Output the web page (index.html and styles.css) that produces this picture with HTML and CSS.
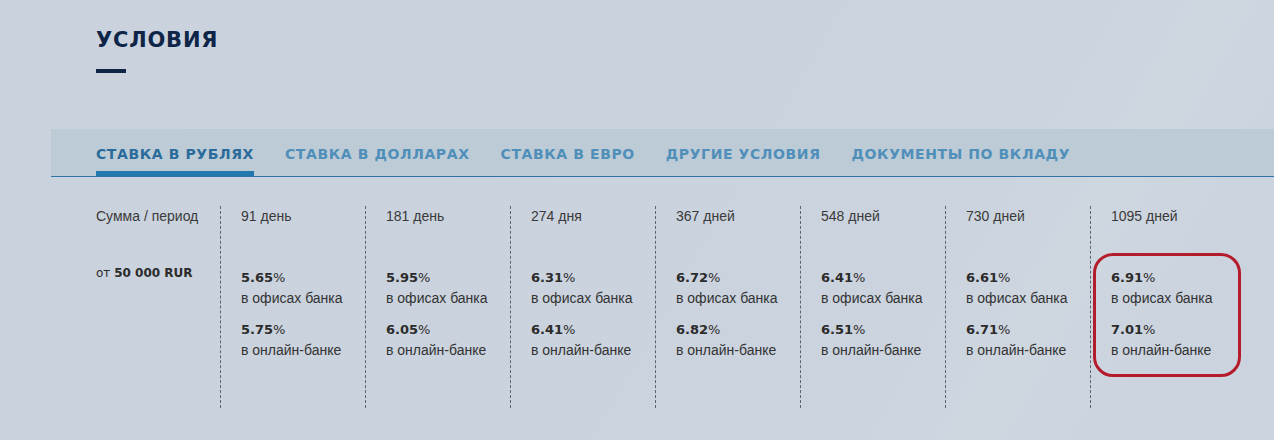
FILE: index.html
```html
<!DOCTYPE html>
<html lang="ru">
<head>
<meta charset="utf-8">
<link rel="stylesheet" href="styles.css">
</head>
<body>
<div class="page">
  <section class="head">
    <h1 class="title">УСЛОВИЯ</h1>
    <div class="title-bar"></div>
  </section>
  <nav class="tabs">
    <a class="tab active">СТАВКА В РУБЛЯХ</a>
    <a class="tab">СТАВКА В ДОЛЛАРАХ</a>
    <a class="tab">СТАВКА В ЕВРО</a>
    <a class="tab">ДРУГИЕ УСЛОВИЯ</a>
    <a class="tab">ДОКУМЕНТЫ ПО ВКЛАДУ</a>
  </nav>
  <div class="table">
    <div class="col first">
      <div class="hd">Сумма / период</div>
      <div class="sum">от <b>50 000 RUR</b></div>
    </div>
    <div class="col">
      <div class="hd">91 день</div>
      <div class="rates">
        <div class="rate"><b>5.65</b>%</div><div class="lbl">в офисах банка</div>
        <div class="rate r2"><b>5.75</b>%</div><div class="lbl">в онлайн-банке</div>
      </div>
    </div>
    <div class="col">
      <div class="hd">181 день</div>
      <div class="rates">
        <div class="rate"><b>5.95</b>%</div><div class="lbl">в офисах банка</div>
        <div class="rate r2"><b>6.05</b>%</div><div class="lbl">в онлайн-банке</div>
      </div>
    </div>
    <div class="col">
      <div class="hd">274 дня</div>
      <div class="rates">
        <div class="rate"><b>6.31</b>%</div><div class="lbl">в офисах банка</div>
        <div class="rate r2"><b>6.41</b>%</div><div class="lbl">в онлайн-банке</div>
      </div>
    </div>
    <div class="col">
      <div class="hd">367 дней</div>
      <div class="rates">
        <div class="rate"><b>6.72</b>%</div><div class="lbl">в офисах банка</div>
        <div class="rate r2"><b>6.82</b>%</div><div class="lbl">в онлайн-банке</div>
      </div>
    </div>
    <div class="col">
      <div class="hd">548 дней</div>
      <div class="rates">
        <div class="rate"><b>6.41</b>%</div><div class="lbl">в офисах банка</div>
        <div class="rate r2"><b>6.51</b>%</div><div class="lbl">в онлайн-банке</div>
      </div>
    </div>
    <div class="col">
      <div class="hd">730 дней</div>
      <div class="rates">
        <div class="rate"><b>6.61</b>%</div><div class="lbl">в офисах банка</div>
        <div class="rate r2"><b>6.71</b>%</div><div class="lbl">в онлайн-банке</div>
      </div>
    </div>
    <div class="col last">
      <div class="hd">1095 дней</div>
      <div class="rates">
        <div class="rate"><b>6.91</b>%</div><div class="lbl">в офисах банка</div>
        <div class="rate r2"><b>7.01</b>%</div><div class="lbl">в онлайн-банке</div>
      </div>
      <div class="highlight"></div>
    </div>
  </div>
</div>
</body>
</html>
```

FILE: styles.css
```css
html, body {
  margin: 0;
  padding: 0;
}
body {
  width: 1274px;
  height: 440px;
  overflow: hidden;
  background: linear-gradient(120deg, #cad2dd 0%, #cbd3de 70%, #ced6e0 80%, #cbd3de 90%);
  font-family: "Liberation Sans", Arial, sans-serif;
  color: #333;
}
.page {
  padding-top: 25px;
}
.head {
  padding-left: 96px;
}
.title {
  margin: 0;
  font-family: "DejaVu Sans", sans-serif;
  font-weight: bold;
  font-size: 21px;
  line-height: 30px;
  letter-spacing: 0.8px;
  color: #0e2548;
}
.title-bar {
  width: 30px;
  height: 4px;
  margin-top: 14px;
  background: #0e2548;
}
.tabs {
  margin: 56px 0 0 51px;
  width: 1203px;
  height: 47px;
  background: #bccbd6;
  border-bottom: 1px solid #2f74a6;
  display: flex;
  gap: 31px;
  padding-left: 45px;
  box-sizing: content-box;
}
.tab {
  display: block;
  font-family: "DejaVu Sans", sans-serif;
  font-weight: bold;
  font-size: 14px;
  letter-spacing: 0.6px;
  color: #4f8fb9;
  padding-top: 16px;
  line-height: 18px;
  height: 47px;
  box-sizing: border-box;
  white-space: nowrap;
}
.tab.active {
  color: #2a6b9b;
  border-bottom: 5px solid #2378ad;
}
.table {
  display: flex;
  margin-top: 29px;
  padding-left: 96px;
}
.col {
  width: 145px;
  box-sizing: border-box;
  padding-left: 20px;
  padding-bottom: 48px;
  border-left: 1px dashed #5c6470;
  position: relative;
  font-size: 14px;
}
.col.first {
  width: 124px;
  padding-left: 0;
  border-left: none;
}
.hd {
  line-height: 20px;
  color: #3a3a3a;
}
.sum {
  margin-top: 37px;
  font-family: "DejaVu Sans", sans-serif;
  font-size: 12px;
  line-height: 20px;
  color: #2b2b2b;
}
.sum b {
  font-weight: bold;
}
.rates {
  margin-top: 42px;
}
.rate {
  font-family: "DejaVu Sans", sans-serif;
  font-size: 13px;
  line-height: 20px;
  color: #2b2b2b;
}
.rate b {
  font-weight: bold;
}
.rate.r2 {
  margin-top: 12px;
}
.lbl {
  line-height: 20px;
  color: #333;
}
.highlight {
  position: absolute;
  left: 2px;
  top: 47px;
  width: 148px;
  height: 124px;
  box-sizing: border-box;
  border: 3px solid #b41c2c;
  border-radius: 20px;
}
```
